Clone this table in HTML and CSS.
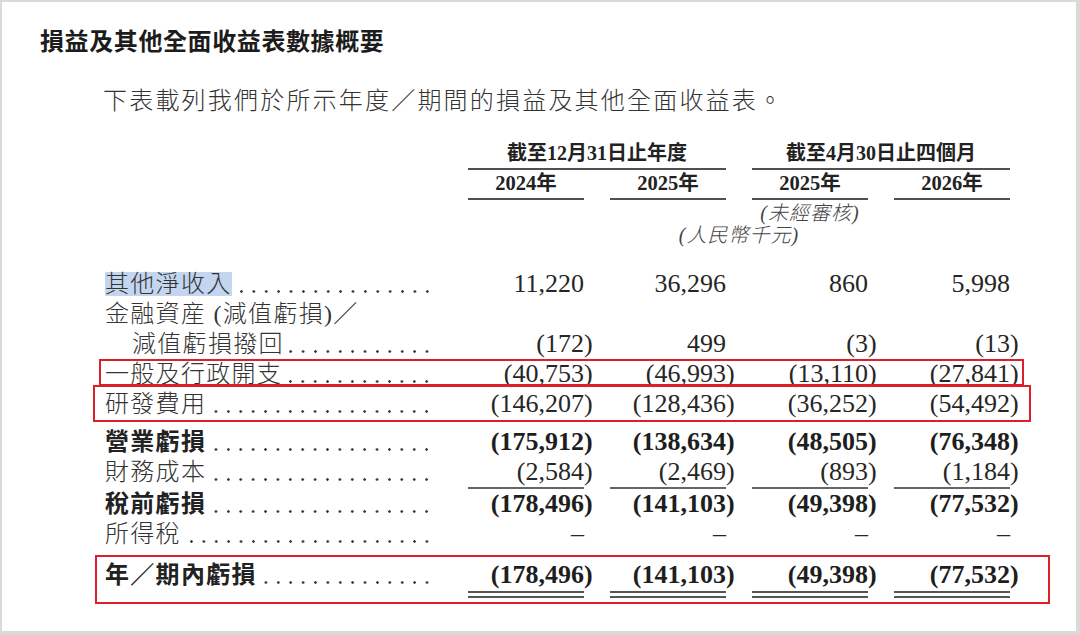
FILE: index.html
```html
<!DOCTYPE html>
<html lang="zh-Hant">
<head>
<meta charset="utf-8">
<title>損益及其他全面收益表數據概要</title>
<link rel="stylesheet" href="styles.css">
</head>
<body>
<div class="page">
  <h1 class="title">損益及其他全面收益表數據概要</h1>
  <p class="intro">下表載列我們於所示年度／期間的損益及其他全面收益表。</p>

  <div class="table">
    <div class="grid head-group">
      <div></div>
      <div class="gh">截至12月31日止年度</div>
      <div class="gh">截至4月30日止四個月</div>
    </div>
    <div class="grid head-years">
      <div></div>
      <div class="yh">2024年</div>
      <div class="yh">2025年</div>
      <div class="yh">2025年</div>
      <div class="yh">2026年</div>
    </div>
    <div class="grid head-note first">
      <div></div>
      <div class="note col3">(未經審核)</div>
    </div>
    <div class="grid head-note">
      <div></div>
      <div class="note all">(人民幣千元)</div>
    </div>

    <div class="grid row first-row">
      <div class="lbl"><span class="txt"><span class="hl">其他淨收入</span></span><span class="dots"></span></div>
      <div class="v">11,220</div>
      <div class="v">36,296</div>
      <div class="v">860</div>
      <div class="v">5,998</div>
    </div>
    <div class="grid row">
      <div class="lbl"><span class="txt">金融資産 (減值虧損)／</span></div>
    </div>
    <div class="grid row">
      <div class="lbl indent"><span class="txt">減值虧損撥回 </span><span class="dots"></span></div>
      <div class="v">(172<span class="cp">)</span></div>
      <div class="v">499</div>
      <div class="v">(3<span class="cp">)</span></div>
      <div class="v">(13<span class="cp">)</span></div>
    </div>
    <div class="grid row">
      <div class="lbl"><span class="txt">一般及行政開支</span><span class="dots"></span></div>
      <div class="v">(40,753<span class="cp">)</span></div>
      <div class="v">(46,993<span class="cp">)</span></div>
      <div class="v">(13,110<span class="cp">)</span></div>
      <div class="v">(27,841<span class="cp">)</span></div>
    </div>
    <div class="grid row">
      <div class="lbl"><span class="txt">研發費用</span><span class="dots"></span></div>
      <div class="v ul ul-tight">(146,207<span class="cp">)</span></div>
      <div class="v ul ul-tight">(128,436<span class="cp">)</span></div>
      <div class="v ul ul-tight">(36,252<span class="cp">)</span></div>
      <div class="v ul ul-tight">(54,492<span class="cp">)</span></div>
    </div>
    <div class="grid row bold after-line">
      <div class="lbl"><span class="txt">營業虧損</span><span class="dots"></span></div>
      <div class="v">(175,912<span class="cp">)</span></div>
      <div class="v">(138,634<span class="cp">)</span></div>
      <div class="v">(48,505<span class="cp">)</span></div>
      <div class="v">(76,348<span class="cp">)</span></div>
    </div>
    <div class="grid row">
      <div class="lbl"><span class="txt">財務成本</span><span class="dots"></span></div>
      <div class="v ul">(2,584<span class="cp">)</span></div>
      <div class="v ul">(2,469<span class="cp">)</span></div>
      <div class="v ul">(893<span class="cp">)</span></div>
      <div class="v ul">(1,184<span class="cp">)</span></div>
    </div>
    <div class="grid row bold">
      <div class="lbl"><span class="txt">稅前虧損</span><span class="dots"></span></div>
      <div class="v">(178,496<span class="cp">)</span></div>
      <div class="v">(141,103<span class="cp">)</span></div>
      <div class="v">(49,398<span class="cp">)</span></div>
      <div class="v">(77,532<span class="cp">)</span></div>
    </div>
    <div class="grid row">
      <div class="lbl"><span class="txt">所得稅 </span><span class="dots"></span></div>
      <div class="v ul ul-loose">–</div>
      <div class="v ul ul-loose">–</div>
      <div class="v ul ul-loose">–</div>
      <div class="v ul ul-loose">–</div>
    </div>
    <div class="grid row bold after-total">
      <div class="lbl"><span class="txt">年／期內虧損 </span><span class="dots"></span></div>
      <div class="v dbl">(178,496<span class="cp">)</span></div>
      <div class="v dbl">(141,103<span class="cp">)</span></div>
      <div class="v dbl">(49,398<span class="cp">)</span></div>
      <div class="v dbl">(77,532<span class="cp">)</span></div>
    </div>
  </div>

  <div class="mark mark-admin"></div>
  <div class="mark mark-rd"></div>
  <div class="mark mark-loss"></div>
</div>
</body>
</html>
```

FILE: styles.css
```css
* { box-sizing: border-box; }

html, body {
  margin: 0;
  padding: 0;
  background: #ffffff;
}

body {
  font-family: "Liberation Serif", "Noto Sans CJK TC", serif;
  color: #2a2a2a;
}

.page {
  position: relative;
  width: 1080px;
  height: 635px;
  border-style: solid;
  border-color: #dadada;
  border-width: 2px 4px 4px 2px;
  overflow: hidden;
  background: #fff;
}

.title {
  margin: 23px 0 0 38px;
  font-family: "Noto Sans CJK TC", sans-serif;
  font-weight: 700;
  font-size: 24px;
  line-height: 30px;
  letter-spacing: 0.6px;
  color: #1c1c1c;
}

.intro {
  margin: 29px 0 0 101px;
  font-family: "Noto Sans CJK TC", sans-serif;
  font-weight: 300;
  font-size: 24px;
  line-height: 30px;
  letter-spacing: 2.2px;
  color: #333;
}

.table {
  margin: 27px 0 0 103px;
}

.grid {
  display: grid;
  grid-template-columns: 337px repeat(4, 116px);
  column-gap: 26px;
  align-items: start;
}

/* header */
.gh {
  grid-column: span 2;
  text-align: center;
  font-family: "Liberation Serif", "Noto Sans CJK TC", serif;
  font-weight: 700;
  font-size: 20px;
  line-height: 24px;
  padding-bottom: 3px;
  border-bottom: 2px solid #505050;
  color: #222;
}

.head-years {
  margin-top: 1px;
}

.yh {
  text-align: center;
  font-family: "Liberation Serif", "Noto Sans CJK TC", serif;
  font-weight: 700;
  font-size: 20.5px;
  line-height: 24px;
  padding-bottom: 3px;
  border-bottom: 2px solid #505050;
  color: #222;
}

.head-note.first {
  margin-top: 2px;
}

.note {
  text-align: center;
  font-family: "Liberation Serif", "Noto Sans CJK TC", serif;
  font-style: italic;
  font-weight: 300;
  font-size: 20px;
  line-height: 22px;
  letter-spacing: 1px;
  color: #444;
}

.note.col3 { grid-column: 4; }
.note.all { grid-column: 2 / 6; }

/* body rows */
.row.first-row {
  margin-top: 23px;
}

.row.after-line {
  margin-top: 5px;
}

.row.after-total {
  margin-top: 3px;
}

.lbl {
  display: flex;
  align-items: stretch;
  height: 30px;
  font-family: "Liberation Serif", "Noto Sans CJK TC", serif;
  font-weight: 300;
  font-size: 24px;
  line-height: 30px;
  letter-spacing: 1.3px;
  color: #333;
  white-space: nowrap;
}

.lbl.indent {
  padding-left: 27px;
}

.bold .lbl {
  font-weight: 700;
  color: #222;
}

.hl {
  display: inline-block;
  line-height: 24px;
  background: #c3d5ef;
}

.dots {
  flex: 1;
  margin: 0 9px 0 2px;
  background-image: radial-gradient(circle, #3a3a3a 1.1px, rgba(0, 0, 0, 0) 1.5px);
  background-size: 12.4px 3px;
  background-repeat: repeat-x;
  background-position: right 0 bottom 6px;
}

.v {
  text-align: right;
  font-family: "Liberation Serif", serif;
  font-size: 26px;
  line-height: 30px;
  white-space: nowrap;
  color: #262626;
}

.bold .v {
  font-weight: 700;
  color: #1e1e1e;
}

.cp {
  margin-right: -0.333em;
}

.v.ul {
  border-bottom: 2px solid #666;
}

.v.ul-tight {
  padding-bottom: 1px;
}

.v.ul-loose {
  padding-bottom: 6px;
}

.v.dbl {
  padding-bottom: 1px;
  border-bottom: 7px double #555;
}

/* red annotation boxes drawn over the table */
.mark {
  position: absolute;
  border: 2px solid #dd1f2a;
  pointer-events: none;
}

.mark-admin {
  left: 97px;
  top: 357px;
  width: 925px;
  height: 27px;
}

.mark-rd {
  left: 91px;
  top: 383px;
  width: 938px;
  height: 37px;
}

.mark-loss {
  left: 93px;
  top: 553px;
  width: 955px;
  height: 49px;
}
```
